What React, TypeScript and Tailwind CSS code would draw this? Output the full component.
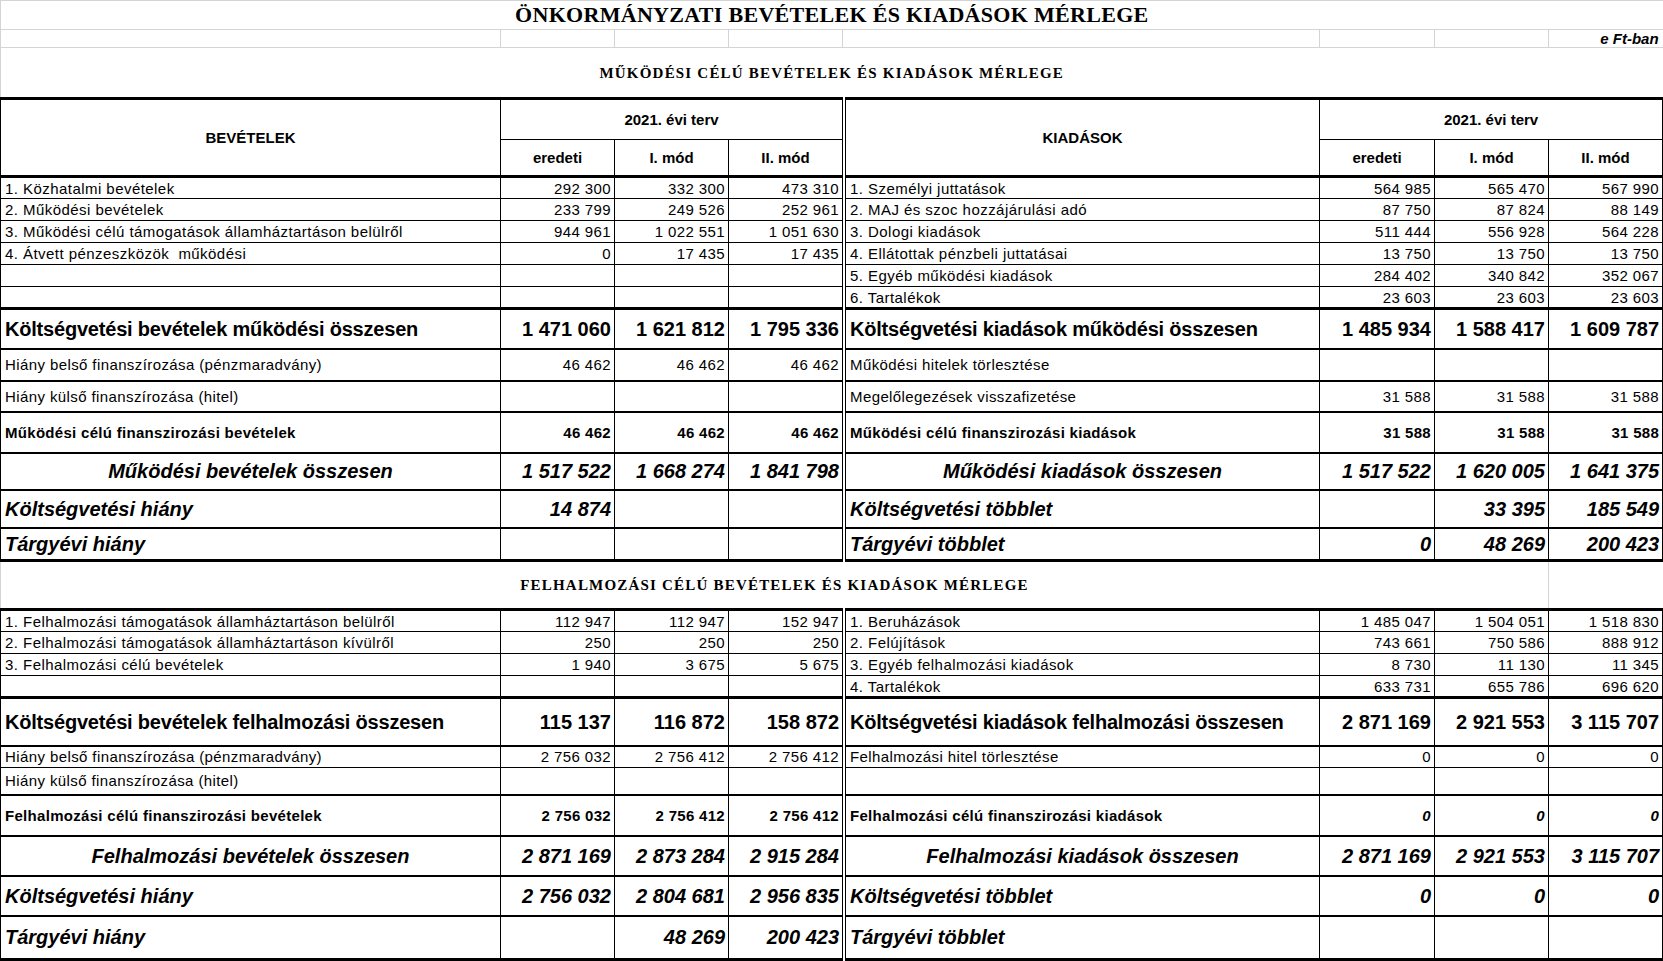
type Kind = 'item' | 'total' | 'plain' | 'sub' | 'sum' | 'bal';

type Line = {
  kind: Kind;
  h: string;
  top: string;
  bottom?: string;
  left: string;
  l: string[];
  right: string;
  r: string[];
  rItalic?: boolean;
};

const labelFont: Record<Kind, string> = {
  item: 'text-[15px] tracking-[0.45px]',
  total: 'text-[20px] font-bold tracking-[-0.2px]',
  plain: 'text-[15px] tracking-[0.4px]',
  sub: 'text-[15px] tracking-[0.3px] font-bold',
  sum: 'text-[20px] font-bold italic text-center',
  bal: 'text-[20px] font-bold italic',
};

const numFont: Record<Kind, string> = {
  item: 'text-[15px] tracking-[0.4px]',
  total: 'text-[20px] font-bold',
  plain: 'text-[15px] tracking-[0.4px]',
  sub: 'text-[15px] tracking-[0.3px] font-bold',
  sum: 'text-[20px] font-bold italic',
  bal: 'text-[20px] font-bold italic',
};

const e = ['', '', ''];

const mukodesi: Line[] = [
  { kind: 'item', h: 'h-[22px]', top: 'border-t-[3px]', left: '1. Közhatalmi bevételek', l: ['292 300', '332 300', '473 310'], right: '1. Személyi juttatások', r: ['564 985', '565 470', '567 990'] },
  { kind: 'item', h: 'h-[22px]', top: 'border-t', left: '2. Működési bevételek', l: ['233 799', '249 526', '252 961'], right: '2. MAJ és szoc hozzájárulási adó', r: ['87 750', '87 824', '88 149'] },
  { kind: 'item', h: 'h-[22px]', top: 'border-t', left: '3. Működési célú támogatások államháztartáson belülről', l: ['944 961', '1 022 551', '1 051 630'], right: '3. Dologi kiadások', r: ['511 444', '556 928', '564 228'] },
  { kind: 'item', h: 'h-[22px]', top: 'border-t', left: '4. Átvett pénzeszközök  működési', l: ['0', '17 435', '17 435'], right: '4. Ellátottak pénzbeli juttatásai', r: ['13 750', '13 750', '13 750'] },
  { kind: 'item', h: 'h-[22px]', top: 'border-t', left: '', l: e, right: '5. Egyéb működési kiadások', r: ['284 402', '340 842', '352 067'] },
  { kind: 'item', h: 'h-[22px]', top: 'border-t', left: '', l: e, right: '6. Tartalékok', r: ['23 603', '23 603', '23 603'] },
  { kind: 'total', h: 'h-[40px]', top: 'border-t-[3px]', left: 'Költségvetési bevételek működési összesen', l: ['1 471 060', '1 621 812', '1 795 336'], right: 'Költségvetési kiadások működési összesen', r: ['1 485 934', '1 588 417', '1 609 787'] },
  { kind: 'plain', h: 'h-[32px]', top: 'border-t-2', left: 'Hiány belső finanszírozása (pénzmaradvány)', l: ['46 462', '46 462', '46 462'], right: 'Működési hitelek törlesztése', r: e },
  { kind: 'plain', h: 'h-[31px]', top: 'border-t-2', left: 'Hiány külső finanszírozása (hitel)', l: e, right: 'Megelőlegezések visszafizetése', r: ['31 588', '31 588', '31 588'] },
  { kind: 'sub', h: 'h-[41px]', top: 'border-t-2', left: 'Működési célú finanszirozási bevételek', l: ['46 462', '46 462', '46 462'], right: 'Működési célú finanszirozási kiadások', r: ['31 588', '31 588', '31 588'] },
  { kind: 'sum', h: 'h-[37px]', top: 'border-t-2', left: 'Működési bevételek összesen', l: ['1 517 522', '1 668 274', '1 841 798'], right: 'Működési kiadások összesen', r: ['1 517 522', '1 620 005', '1 641 375'] },
  { kind: 'bal', h: 'h-[38px]', top: 'border-t-2', left: 'Költségvetési hiány', l: ['14 874', '', ''], right: 'Költségvetési többlet', r: ['', '33 395', '185 549'] },
  { kind: 'bal', h: 'h-[33px]', top: 'border-t-2', bottom: 'border-b-[3px]', left: 'Tárgyévi hiány', l: e, right: 'Tárgyévi többlet', r: ['0', '48 269', '200 423'] },
];

const felhalmozasi: Line[] = [
  { kind: 'item', h: 'h-[22px]', top: 'border-t-[3px]', left: '1. Felhalmozási támogatások államháztartáson belülről', l: ['112 947', '112 947', '152 947'], right: '1. Beruházások', r: ['1 485 047', '1 504 051', '1 518 830'] },
  { kind: 'item', h: 'h-[22px]', top: 'border-t', left: '2. Felhalmozási támogatások államháztartáson kívülről', l: ['250', '250', '250'], right: '2. Felújítások', r: ['743 661', '750 586', '888 912'] },
  { kind: 'item', h: 'h-[22px]', top: 'border-t', left: '3. Felhalmozási célú bevételek', l: ['1 940', '3 675', '5 675'], right: '3. Egyéb felhalmozási kiadások', r: ['8 730', '11 130', '11 345'] },
  { kind: 'item', h: 'h-[22px]', top: 'border-t', left: '', l: e, right: '4. Tartalékok', r: ['633 731', '655 786', '696 620'] },
  { kind: 'total', h: 'h-[48px]', top: 'border-t-[3px]', left: 'Költségvetési bevételek felhalmozási összesen', l: ['115 137', '116 872', '158 872'], right: 'Költségvetési kiadások felhalmozási összesen', r: ['2 871 169', '2 921 553', '3 115 707'] },
  { kind: 'plain', h: 'h-[22px]', top: 'border-t-2', left: 'Hiány belső finanszírozása (pénzmaradvány)', l: ['2 756 032', '2 756 412', '2 756 412'], right: 'Felhalmozási hitel törlesztése', r: ['0', '0', '0'] },
  { kind: 'plain', h: 'h-[27px]', top: 'border-t', left: 'Hiány külső finanszírozása (hitel)', l: e, right: '', r: e },
  { kind: 'sub', h: 'h-[41px]', top: 'border-t-2', left: 'Felhalmozási célú finanszirozási bevételek', l: ['2 756 032', '2 756 412', '2 756 412'], right: 'Felhalmozási célú finanszirozási kiadások', r: ['0', '0', '0'], rItalic: true },
  { kind: 'sum', h: 'h-[40px]', top: 'border-t-2', left: 'Felhalmozási bevételek összesen', l: ['2 871 169', '2 873 284', '2 915 284'], right: 'Felhalmozási kiadások összesen', r: ['2 871 169', '2 921 553', '3 115 707'] },
  { kind: 'bal', h: 'h-[40px]', top: 'border-t-2', left: 'Költségvetési hiány', l: ['2 756 032', '2 804 681', '2 956 835'], right: 'Költségvetési többlet', r: ['0', '0', '0'] },
  { kind: 'bal', h: 'h-[44px]', top: 'border-t-2', bottom: 'border-b-[3px]', left: 'Tárgyévi hiány', l: ['', '48 269', '200 423'], right: 'Tárgyévi többlet', r: e },
];

const Row = ({ line }: { line: Line }) => {
  const edge = `${line.top} ${line.bottom ?? ''} border-black`;
  const label = `${edge} px-[4px] whitespace-pre overflow-hidden ${labelFont[line.kind]}`;
  const num = `${edge} border-r px-[3px] text-right whitespace-nowrap ${numFont[line.kind]}`;
  return (
    <tr className={line.h}>
      <td className={`${label} border-l border-r`}>{line.left}</td>
      {line.l.map((v, i) => (
        <td key={i} className={num}>{v}</td>
      ))}
      <td className="border-r border-black p-0" />
      <td className={`${label} border-r`}>{line.right}</td>
      {line.r.map((v, i) => (
        <td key={i} className={`${num} ${line.rItalic ? 'italic' : ''}`}>{v}</td>
      ))}
    </tr>
  );
};

const SectionTitle = ({ children }: { children: string }) => (
  <span className="font-['Liberation_Serif','Times_New_Roman',serif] text-[15px] font-black tracking-[1.2px] uppercase">
    {children}
  </span>
);

export default function App() {
  return (
    <div className="min-h-screen w-[1663px] bg-white text-black">
      <table className="w-[1662px] table-fixed border-collapse font-['Liberation_Sans',Arial,sans-serif] leading-none">
        <colgroup>
          <col className="w-[500px]" />
          <col className="w-[114px]" />
          <col className="w-[114px]" />
          <col className="w-[114px]" />
          <col className="w-[3px]" />
          <col className="w-[474px]" />
          <col className="w-[115px]" />
          <col className="w-[114px]" />
          <col className="w-[114px]" />
        </colgroup>
        <tbody>
          <tr className="h-[29px]">
            <td colSpan={9} className="border-t border-b border-l border-[#d4d4d4] text-center">
              <span className="font-['Liberation_Serif','Times_New_Roman',serif] text-[22px] font-black tracking-[0.3px] uppercase">
                Önkormányzati bevételek és kiadások mérlege
              </span>
            </td>
          </tr>
          <tr className="h-[18px]">
            <td className="border-l border-r border-b border-[#d4d4d4]" />
            <td className="border-r border-b border-[#d4d4d4]" />
            <td className="border-r border-b border-[#d4d4d4]" />
            <td className="border-r border-b border-[#d4d4d4]" />
            <td className="border-b border-[#d4d4d4]" />
            <td className="border-r border-b border-[#d4d4d4]" />
            <td className="border-r border-b border-[#d4d4d4]" />
            <td className="border-r border-b border-[#d4d4d4]" />
            <td className="border-b border-[#d4d4d4] px-[4px] text-right text-[15px] font-bold italic whitespace-nowrap">
              e Ft-ban
            </td>
          </tr>
          <tr className="h-[51px]">
            <td colSpan={9} className="border-l border-[#d4d4d4] text-center">
              <SectionTitle>Működési célú bevételek és kiadások mérlege</SectionTitle>
            </td>
          </tr>
          <tr className="h-[41px]">
            <td rowSpan={2} className="border-t-[3px] border-b-[3px] border-l border-r border-black text-center text-[15px] font-bold">
              BEVÉTELEK
            </td>
            <td colSpan={3} className="border-t-[3px] border-r border-b border-black text-center text-[15px] font-bold">
              2021. évi terv
            </td>
            <td rowSpan={2} className="border-r border-black p-0" />
            <td rowSpan={2} className="border-t-[3px] border-b-[3px] border-r border-black text-center text-[15px] font-bold">
              KIADÁSOK
            </td>
            <td colSpan={3} className="border-t-[3px] border-r border-b border-black text-center text-[15px] font-bold">
              2021. évi terv
            </td>
          </tr>
          <tr className="h-[37px]">
            {['eredeti', 'I. mód', 'II. mód'].map((t) => (
              <td key={t} className="border-b-[3px] border-r border-black text-center text-[15px] font-bold">
                {t}
              </td>
            ))}
            {['eredeti', 'I. mód', 'II. mód'].map((t) => (
              <td key={'k' + t} className="border-b-[3px] border-r border-black text-center text-[15px] font-bold">
                {t}
              </td>
            ))}
          </tr>
          {mukodesi.map((line, i) => (
            <Row key={'m' + i} line={line} />
          ))}
          <tr className="h-[49px]">
            <td colSpan={8} className="border-l border-[#d4d4d4] text-center">
              <SectionTitle>Felhalmozási célú bevételek és kiadások mérlege</SectionTitle>
            </td>
            <td className="border-l border-[#d4d4d4]" />
          </tr>
          {felhalmozasi.map((line, i) => (
            <Row key={'f' + i} line={line} />
          ))}
        </tbody>
      </table>
    </div>
  );
}
